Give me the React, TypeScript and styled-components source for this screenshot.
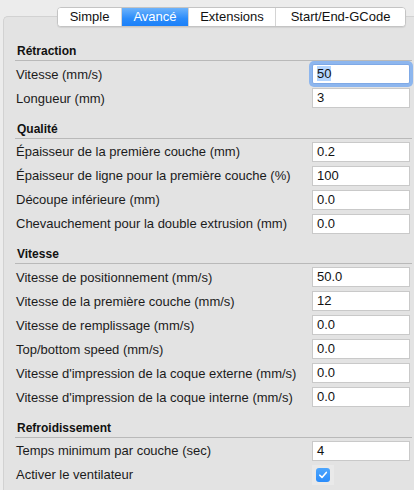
import React from 'react'
import styled, { createGlobalStyle } from 'styled-components'

const GlobalStyle = createGlobalStyle`
  html, body {
    margin: 0;
    padding: 0;
    background: #ececec;
  }
  body {
    font-family: "Liberation Sans", Arial, sans-serif;
    color: #1b1b1b;
  }
`

const Window = styled.div`
  width: 414px;
  height: 490px;
  overflow: hidden;
  background: #ececec;
`

const TabBar = styled.div`
  position: relative;
  z-index: 1;
  display: flex;
  width: max-content;
  margin: 7px 0 -11px 57px;
  background: #fff;
  border: 1px solid #c4c4c4;
  border-radius: 4px;
  overflow: hidden;
  box-shadow: 0 1px 1px rgba(0, 0, 0, 0.08);
`

const Tab = styled.div<{ $w: number; $active?: boolean }>`
  width: ${(p) => p.$w}px;
  height: 18px;
  line-height: 18px;
  font-size: 13px;
  text-align: center;
  box-sizing: border-box;
  color: ${(p) => (p.$active ? '#fff' : '#111')};
  background: ${(p) => (p.$active ? 'linear-gradient(#6db3fb, #2a8bfa 60%, #1b80f9)' : '#fff')};
  & + & {
    border-left: 1px solid #d4d4d4;
  }
`

const Panel = styled.div`
  margin-left: 3px;
  height: 474px;
  box-sizing: border-box;
  padding-top: 27px;
  background: #e3e3e3;
  border-top: 1px solid #d2d2d2;
  border-left: 1px solid #d2d2d2;
  border-top-left-radius: 5px;
`

const Section = styled.div`
  & + & {
    margin-top: 11.5px;
  }
`

const Header = styled.div`
  margin: 0 2px 1px 11px;
  padding: 0 0 2px 2px;
  height: 14px;
  line-height: 14px;
  font-size: 12px;
  font-weight: bold;
  color: #111;
  border-bottom: 1px solid #b9b9b9;
`

const Row = styled.div`
  display: flex;
  align-items: center;
  height: 24px;
  padding-left: 12px;
  padding-right: 4px;
`

const Label = styled.div`
  flex: 1;
  font-size: 13px;
  white-space: nowrap;
`

const Field = styled.div<{ $focused?: boolean }>`
  width: 98px;
  height: 20px;
  box-sizing: border-box;
  padding-left: 4px;
  line-height: 18px;
  font-size: 13px;
  background: #fff;
  border: 1px solid ${(p) => (p.$focused ? '#7fa9e6' : '#c9c9c9')};
  box-shadow: ${(p) => (p.$focused ? '0 0 0 3px #8db6ee' : 'none')};
  border-radius: ${(p) => (p.$focused ? '2px' : '0')};
  color: #111;
`

const Selected = styled.span`
  background: #b4d5fe;
`

const CheckHolder = styled.div`
  width: 98px;
  height: 20px;
  display: flex;
  align-items: center;
`

const CheckArea = styled.div`
  width: 22px;
  height: 20px;
  display: flex;
  align-items: center;
  justify-content: center;
  background: #e9e9e9;
`

const CheckBox = styled.div`
  width: 14px;
  height: 14px;
  border-radius: 3px;
  background: linear-gradient(#4ea6fd, #2a8cfb);
  display: flex;
  align-items: center;
  justify-content: center;
`

type Item = { label: string; value?: string; focused?: boolean; check?: boolean }

const sections: { title: string; items: Item[] }[] = [
  {
    title: 'Rétraction',
    items: [
      { label: 'Vitesse (mm/s)', value: '50', focused: true },
      { label: 'Longueur (mm)', value: '3' },
    ],
  },
  {
    title: 'Qualité',
    items: [
      { label: 'Épaisseur de la première couche (mm)', value: '0.2' },
      { label: 'Épaisseur de ligne pour la première couche (%)', value: '100' },
      { label: 'Découpe inférieure (mm)', value: '0.0' },
      { label: 'Chevauchement pour la double extrusion (mm)', value: '0.0' },
    ],
  },
  {
    title: 'Vitesse',
    items: [
      { label: 'Vitesse de positionnement (mm/s)', value: '50.0' },
      { label: 'Vitesse de la première couche (mm/s)', value: '12' },
      { label: 'Vitesse de remplissage (mm/s)', value: '0.0' },
      { label: 'Top/bottom speed (mm/s)', value: '0.0' },
      { label: "Vitesse d'impression de la coque externe (mm/s)", value: '0.0' },
      { label: "Vitesse d'impression de la coque interne (mm/s)", value: '0.0' },
    ],
  },
  {
    title: 'Refroidissement',
    items: [
      { label: 'Temps minimum par couche (sec)', value: '4' },
      { label: 'Activer le ventilateur', check: true },
    ],
  },
]

const App: React.FC = () => {
  return (
    <Window>
      <GlobalStyle />
      <TabBar>
        <Tab $w={63}>Simple</Tab>
        <Tab $w={67} $active>Avancé</Tab>
        <Tab $w={87}>Extensions</Tab>
        <Tab $w={130}>Start/End-GCode</Tab>
      </TabBar>
      <Panel>
        {sections.map((s) => (
          <Section key={s.title}>
            <Header>{s.title}</Header>
            {s.items.map((it) => (
              <Row key={it.label}>
                <Label>{it.label}</Label>
                {it.check ? (
                  <CheckHolder>
                    <CheckArea>
                      <CheckBox>
                        <svg width="10" height="10" viewBox="0 0 10 10">
                          <path d="M1.8 5.2 L4 7.4 L8.3 2.4" fill="none" stroke="#fff" strokeWidth="1.6" strokeLinecap="round" strokeLinejoin="round" />
                        </svg>
                      </CheckBox>
                    </CheckArea>
                  </CheckHolder>
                ) : (
                  <Field $focused={it.focused}>
                    {it.focused ? <Selected>{it.value}</Selected> : it.value}
                  </Field>
                )}
              </Row>
            ))}
          </Section>
        ))}
      </Panel>
    </Window>
  )
}

export default App
